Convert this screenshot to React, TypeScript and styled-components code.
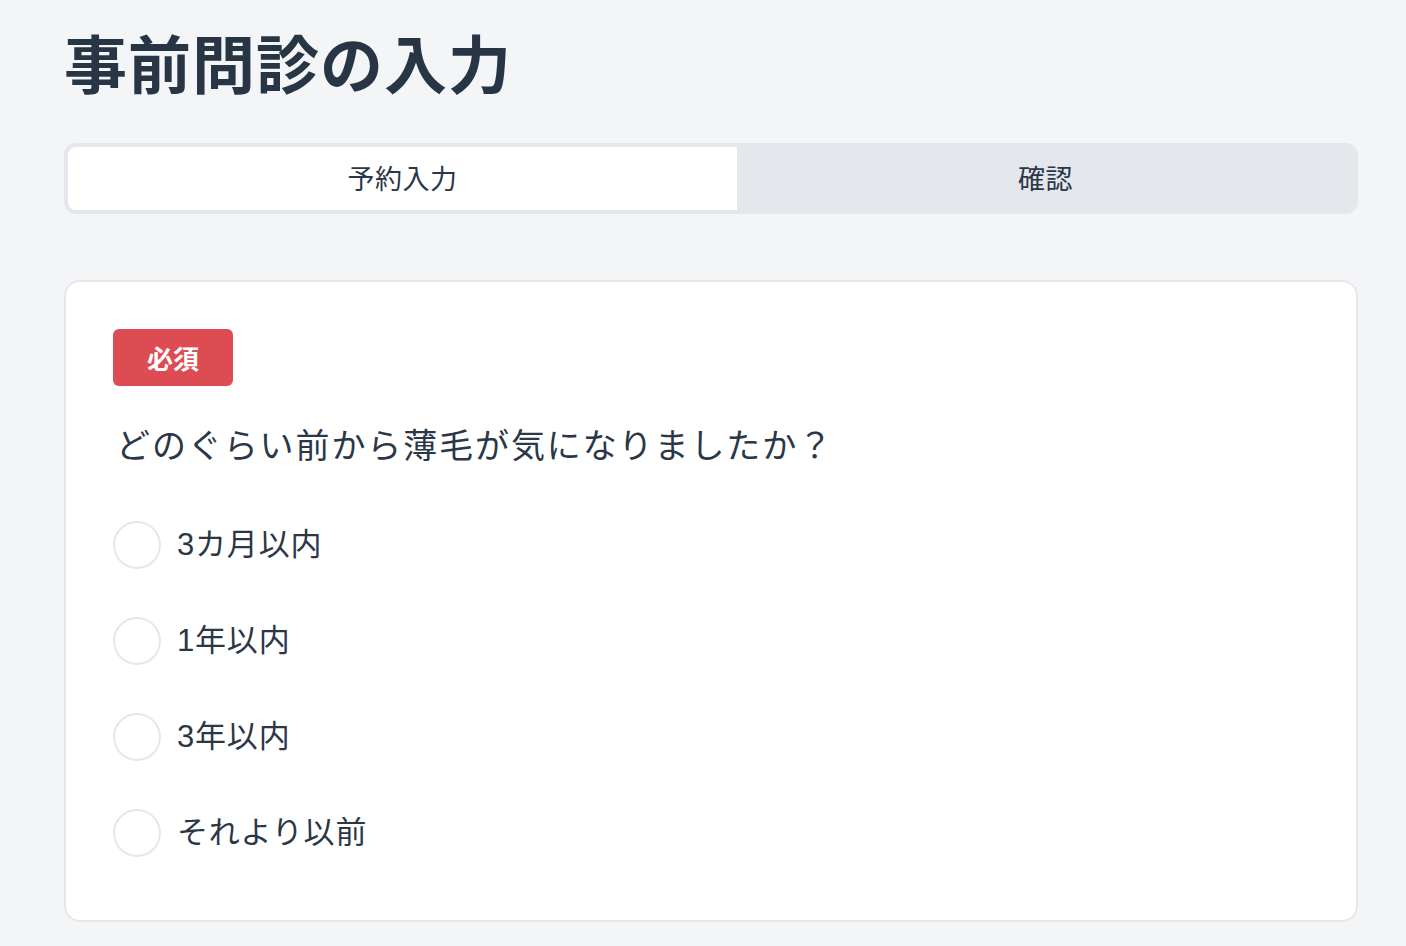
import React from "react";
import styled, { createGlobalStyle } from "styled-components";

const Global = createGlobalStyle`
  html, body { margin: 0; padding: 0; background: #f4f5f7; }
  body { font-family: "Liberation Sans", "Noto Sans CJK JP", sans-serif; color: #2b3747; }
`;

const Page = styled.div`
  padding: 15px 48px 40px 64px;
  display: flex;
  flex-direction: column;
`;

const Title = styled.h1`
  margin: 0;
  font-family: "Noto Sans CJK JP", sans-serif;
  font-size: 63px;
  font-weight: 700;
  line-height: 92px;
  color: #283545;
  letter-spacing: 1px;
`;

const Tabs = styled.div`
  margin-top: 36px;
  display: grid;
  grid-template-columns: 669fr 617fr;
  background: #e4e7ec;
  border: 4px solid #e4e7ec;
  border-radius: 12px;
  height: 63px;
`;

const Tab = styled.div<{ $active?: boolean }>`
  display: flex;
  align-items: center;
  justify-content: center;
  padding-bottom: 2px;
  background: ${(p) => (p.$active ? "#ffffff" : "transparent")};
  border-radius: ${(p) => (p.$active ? "8px 0 0 8px" : "0")};
  font-family: "Noto Sans CJK JP", sans-serif;
  font-size: 27px;
  color: #2b3747;
  letter-spacing: 0.5px;
`;

const Card = styled.div`
  margin-top: 66px;
  background: #ffffff;
  border: 2px solid #e5e7eb;
  border-radius: 16px;
  padding: 47px 48px 63px 47px;
  display: flex;
  flex-direction: column;
  align-items: flex-start;
`;

const Badge = styled.span`
  display: inline-flex;
  align-items: center;
  justify-content: center;
  width: 120px;
  height: 57px;
  background: #dd4c53;
  color: #ffffff;
  border-radius: 6px;
  font-family: "Noto Sans CJK JP", sans-serif;
  font-weight: 700;
  font-size: 26px;
`;

const Question = styled.p`
  margin: 38px 0 0 3px;
  font-family: "Noto Sans CJK JP", sans-serif;
  font-size: 34px;
  line-height: 40px;
  letter-spacing: 1.9px;
  color: #2b3747;
`;

const Options = styled.div`
  margin-top: 57px;
  display: flex;
  flex-direction: column;
  gap: 48px;
`;

const Option = styled.label`
  display: flex;
  align-items: center;
  gap: 16px;
  height: 48px;
  cursor: pointer;
`;

const Radio = styled.span`
  width: 48px;
  height: 48px;
  box-sizing: border-box;
  border: 2px solid #e5e7eb;
  border-radius: 50%;
  background: #ffffff;
  flex: none;
`;

const OptionText = styled.span`
  font-size: 31px;
  line-height: 40px;
  padding-bottom: 1px;
  letter-spacing: 0.8px;
  color: #2b3747;
`;

const options = ["3カ月以内", "1年以内", "3年以内", "それより以前"];

export default function App() {
  return (
    <>
      <Global />
      <Page>
        <Title>事前問診の入力</Title>
        <Tabs>
          <Tab $active>予約入力</Tab>
          <Tab>確認</Tab>
        </Tabs>
        <Card>
          <Badge>必須</Badge>
          <Question>どのぐらい前から薄毛が気になりましたか？</Question>
          <Options>
            {options.map((o) => (
              <Option key={o}>
                <Radio />
                <OptionText>{o}</OptionText>
              </Option>
            ))}
          </Options>
        </Card>
      </Page>
    </>
  );
}
